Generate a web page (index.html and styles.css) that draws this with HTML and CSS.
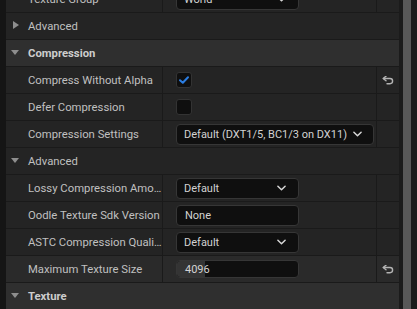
FILE: index.html
```html
<!DOCTYPE html>
<html>
<head>
<meta charset="utf-8">
<link rel="stylesheet" href="styles.css">
</head>
<body>
<div class="window">
  <div class="strip"></div>
  <div class="panel">
    <div class="list">
      <div class="row prop">
        <div class="name">Texture Group</div>
        <div class="value"><div class="combo short"><span>World</span><svg class="chev" viewBox="0 0 10 6"><path d="M1 1 L5 5 L9 1"/></svg></div></div>
        <div class="reset"></div>
      </div>
      <div class="row group"><span class="tri tri-right"></span><span>Advanced</span></div>
      <div class="row header"><span class="tri tri-down"></span><span>Compression</span></div>
      <div class="row prop">
        <div class="name">Compress Without Alpha</div>
        <div class="value"><div class="check"><svg viewBox="0 0 10 8"><path d="M1 4.2 L3.8 6.8 L9 1.2"/></svg></div></div>
        <div class="reset"><svg class="undo" viewBox="0 0 12 9"><path d="M1.5 2.5 H8 A2.6 2.6 0 0 1 8 7.7 H5"/><path d="M4 0.2 L1.2 2.5 L4 4.8"/></svg></div>
      </div>
      <div class="row prop">
        <div class="name">Defer Compression</div>
        <div class="value"><div class="check"></div></div>
        <div class="reset"></div>
      </div>
      <div class="row prop">
        <div class="name">Compression Settings</div>
        <div class="value"><div class="combo wide"><span>Default (DXT1/5, BC1/3 on DX11)</span><svg class="chev" viewBox="0 0 10 6"><path d="M1 1 L5 5 L9 1"/></svg></div></div>
        <div class="reset"></div>
      </div>
      <div class="row group"><span class="tri tri-down"></span><span>Advanced</span></div>
      <div class="row prop">
        <div class="name">Lossy Compression Amo…</div>
        <div class="value"><div class="combo short"><span>Default</span><svg class="chev" viewBox="0 0 10 6"><path d="M1 1 L5 5 L9 1"/></svg></div></div>
        <div class="reset"></div>
      </div>
      <div class="row prop">
        <div class="name">Oodle Texture Sdk Version</div>
        <div class="value"><div class="textbox"><span>None</span></div></div>
        <div class="reset"></div>
      </div>
      <div class="row prop">
        <div class="name">ASTC Compression Quali…</div>
        <div class="value"><div class="combo short"><span>Default</span><svg class="chev" viewBox="0 0 10 6"><path d="M1 1 L5 5 L9 1"/></svg></div></div>
        <div class="reset"></div>
      </div>
      <div class="row prop hovered">
        <div class="name">Maximum Texture Size</div>
        <div class="value"><div class="numbox"><div class="fill"></div><span>4096</span></div></div>
        <div class="reset"><svg class="undo" viewBox="0 0 12 9"><path d="M1.5 2.5 H8 A2.6 2.6 0 0 1 8 7.7 H5"/><path d="M4 0.2 L1.2 2.5 L4 4.8"/></svg></div>
      </div>
      <div class="row header"><span class="tri tri-down"></span><span>Texture</span></div>
    </div>
  </div>
  <div class="scrollbar"><div class="thumb"></div></div>
</div>
</body>
</html>
```
FILE: styles.css
```css
* { box-sizing: border-box; }
html, body { margin: 0; padding: 0; background: #151515; }
body { font-family: Roboto, "Noto Sans", sans-serif; font-size: 11.3px; color: #c0c0c0; }

.window { display: flex; width: 417px; height: 309px; overflow: hidden; }
.strip { width: 6px; flex: none; background: #151515; }
.panel { width: 393px; flex: none; background: #242424; overflow: hidden; }
.list { margin-top: -14px; }

.row { height: 27px; border-bottom: 1px solid #1a1a1a; background: #242424; }
.row.hovered { background: #2a2a2a; }

.prop { display: grid; grid-template-columns: 157px 214px 22px; }
.name { border-right: 1px solid #1a1a1a; padding-left: 22px; display: flex; align-items: center; white-space: nowrap; overflow: hidden; }
.value { border-right: 1px solid #1a1a1a; padding-left: 13px; display: flex; align-items: center; }
.reset { display: flex; align-items: center; justify-content: center; }

.group, .header { display: flex; align-items: center; }
.header { background: #2f2f2f; font-weight: bold; color: #cdcdcd; }
.tri { width: 22px; flex: none; position: relative; height: 10px; }
.tri-down::before { content: ""; position: absolute; left: 5px; top: 2px; border-left: 4.5px solid transparent; border-right: 4.5px solid transparent; border-top: 5px solid #8e8e8e; }
.tri-right::before { content: ""; position: absolute; left: 7px; top: 0; border-top: 4.5px solid transparent; border-bottom: 4.5px solid transparent; border-left: 6px solid #8e8e8e; }

.combo, .textbox, .numbox { height: 21px; width: 123px; background: #0f0f0f; border: 1px solid #363636; border-radius: 4px; display: flex; align-items: center; color: #d2d2d2; position: relative; font-size: 11px; }
.combo { padding: 0 12px 0 7px; justify-content: space-between; }
.combo.wide { width: 198px; padding-right: 11px; }
.textbox { padding-left: 8px; }
.chev { width: 9px; height: 6px; flex: none; fill: none; stroke: #d8d8d8; stroke-width: 1.6; stroke-linecap: round; stroke-linejoin: round; }

.check { width: 16px; height: 16px; background: #0f0f0f; border: 1px solid #333; border-radius: 3px; display: flex; align-items: center; justify-content: center; }
.check svg { width: 10px; height: 8px; fill: none; stroke: #2b7de1; stroke-width: 2; stroke-linecap: round; stroke-linejoin: round; }

.numbox { height: 18px; padding-left: 8px; overflow: hidden; }
.numbox .fill { position: absolute; left: 0; top: 0; bottom: 0; width: 28px; background: #343434; border-radius: 3px 0 0 3px; }
.numbox span { position: relative; }

.undo { width: 12px; height: 9px; fill: none; stroke: #b4b4b4; stroke-width: 1.4; stroke-linecap: round; stroke-linejoin: round; }

.scrollbar { width: 18px; flex: none; background: #1b1b1b; padding-left: 4px; }
.thumb { width: 8px; height: 309px; background: #585858; }
```
